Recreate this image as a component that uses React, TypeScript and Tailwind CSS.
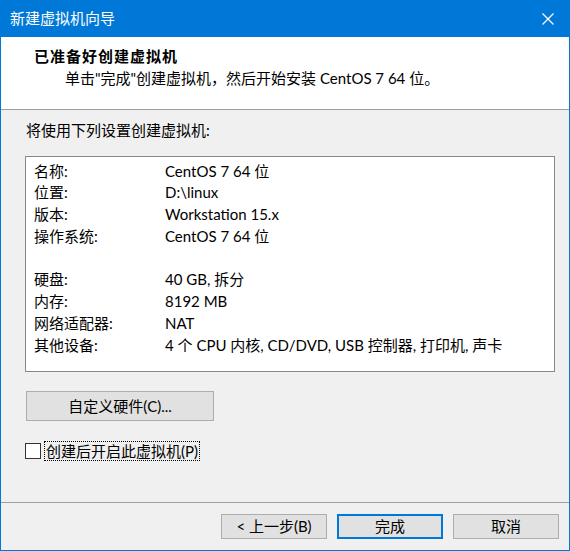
const rows = [
  { label: "名称:", value: "CentOS 7 64 位" },
  { label: "位置:", value: "D:\\linux" },
  { label: "版本:", value: "Workstation 15.x" },
  { label: "操作系统:", value: "CentOS 7 64 位" },
  { label: "", value: "" },
  { label: "硬盘:", value: "40 GB, 拆分" },
  { label: "内存:", value: "8192 MB" },
  { label: "网络适配器:", value: "NAT" },
  { label: "其他设备:", value: "4 个 CPU 内核, CD/DVD, USB 控制器, 打印机, 声卡" },
];

export default function App() {
  return (
    <div className="w-[570px] h-[551px] flex flex-col bg-[#f0f0f0] border-x border-b border-[#0078d7] text-[15px] text-black font-['Segoe_UI','Lato','Noto_Sans_CJK_SC',sans-serif]">
      {/* title bar */}
      <div className="h-[37px] shrink-0 bg-[#0078d7] flex items-center justify-between pl-[9px] pr-[15px] text-white">
        <span className="leading-none">新建虚拟机向导</span>
        <svg width="12" height="12" viewBox="0 0 12 12" className="mt-[1px]">
          <path d="M0.5 0.5 L11.5 11.5 M11.5 0.5 L0.5 11.5" stroke="white" strokeWidth="1.2" />
        </svg>
      </div>

      {/* header */}
      <div className="h-[73px] shrink-0 bg-white border-b border-[#a0a0a0] flex flex-col pt-[9px]">
        <div className="pl-[33px] font-bold tracking-[1px] leading-[20px]">已准备好创建虚拟机</div>
        <div className="pl-[64px] leading-[20px] mt-[2px]">
          单击"完成"创建虚拟机，然后开始安装 CentOS 7 64 位。
        </div>
      </div>

      {/* body */}
      <div className="flex-1 flex flex-col px-[24px] pt-[10px]">
        <div className="leading-[20px] pl-[1px]">将使用下列设置创建虚拟机:</div>
        <div className="mt-[16px] w-[530px] h-[216px] bg-white border border-[#828790] pt-[3px] pl-[8px]">
          {rows.map((r, i) => (
            <div key={i} className="flex h-[21.75px] items-center">
              <span className="w-[131px] shrink-0">{r.label}</span>
              <span>{r.value}</span>
            </div>
          ))}
        </div>
        <button className="mt-[19px] ml-[1px] w-[188px] h-[30px] bg-[#e1e1e1] border border-[#adadad] flex items-center justify-center">
          自定义硬件(C)...
        </button>
        <label className="mt-[20px] flex items-center">
          <span className="w-[16px] h-[16px] bg-white border border-[#333333] shrink-0"></span>
          <span className="ml-[3px] h-[20px] px-[1px] flex items-center border border-dotted border-black">
            创建后开启此虚拟机(P)
          </span>
        </label>
      </div>

      {/* footer */}
      <div className="h-[48px] shrink-0 border-t border-[#a0a0a0] flex justify-end items-start gap-[10px] pt-[11px] pr-[10px]">
        <button className="w-[106px] h-[25px] bg-[#e1e1e1] border border-[#adadad] flex items-center justify-center">
          &lt; 上一步(B)
        </button>
        <button className="w-[106px] h-[25px] bg-[#e1e1e1] border-2 border-[#0078d7] flex items-center justify-center">
          完成
        </button>
        <button className="w-[106px] h-[25px] bg-[#e1e1e1] border border-[#adadad] flex items-center justify-center">
          取消
        </button>
      </div>
    </div>
  );
}
